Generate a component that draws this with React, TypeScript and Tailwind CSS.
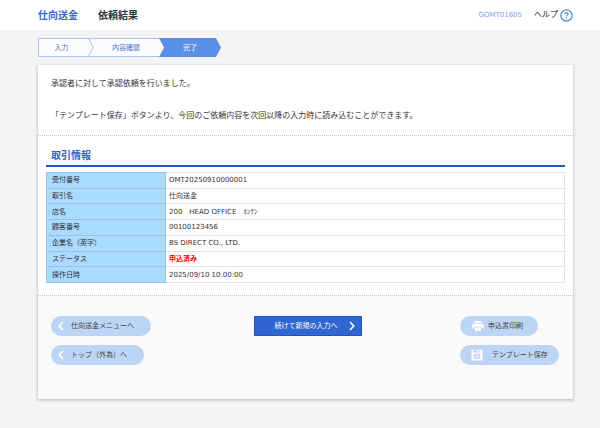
import React from 'react';

interface DetailRow {
  label: string;
  value: string;
  highlight?: boolean;
}

const rows: DetailRow[] = [
  { label: '受付番号', value: 'OMT20250910000001' },
  { label: '取引名', value: '仕向送金' },
  { label: '店名', value: '200　HEAD OFFICE　ﾎﾝﾃﾝ' },
  { label: '顧客番号', value: '00100123456' },
  { label: '企業名（英字）', value: 'BS DIRECT CO., LTD.' },
  { label: 'ステータス', value: '申込済み', highlight: true },
  { label: '操作日時', value: '2025/09/10 10:00:00' },
];

const ChevronLeft = () => (
  <svg width="6" height="10" viewBox="0 0 6 10" fill="none" stroke="#fff" strokeWidth="1.6" aria-hidden="true">
    <path d="M5 1 1.2 5 5 9" />
  </svg>
);

const ChevronRight = () => (
  <svg width="6" height="10" viewBox="0 0 6 10" fill="none" stroke="#fff" strokeWidth="1.6" aria-hidden="true">
    <path d="M1 1l3.8 4L1 9" />
  </svg>
);

const HelpIcon = () => (
  <svg width="13" height="13" viewBox="0 0 13 13" fill="none" stroke="#5585e2" aria-hidden="true">
    <circle cx="6.5" cy="6.5" r="5.6" strokeWidth="1.3" />
    <path d="M4.9 5.2c0-1 .7-1.6 1.6-1.6s1.6.6 1.6 1.4c0 1.1-1.6 1.2-1.6 2.5" strokeWidth="1.1" />
    <path d="M6.5 8.5v1.2" strokeWidth="1.2" />
  </svg>
);

const PrinterIcon = () => (
  <svg width="12" height="10" viewBox="0 0 12 10" aria-hidden="true">
    <path fill="#fff" d="M2.5 0h7v2h-7zM1.5 2.7h9A1.2 1.2 0 0 1 11.7 4v3.6H9.8V5.7H2.2v1.9H.3V4a1.2 1.2 0 0 1 1.2-1.3z" />
    <path fill="#fff" d="M3 6.4h6V10H3z" />
    <circle cx="9.9" cy="4.1" r=".5" fill="#bcd5f5" />
  </svg>
);

const SaveIcon = () => (
  <svg width="12" height="12" viewBox="0 0 12 12" aria-hidden="true">
    <path fill="#fff" d="M1 .5h1.5v3h6v-3H10l1.5 1.6V11a.6.6 0 0 1-.6.6H1.1a.6.6 0 0 1-.6-.6V1A.5.5 0 0 1 1 .5z" />
    <path fill="#fff" d="M5.6.5h1.5v2.2H5.6z" />
    <path fill="#bcd5f5" d="M2.7 5h6.6v5H2.7z" />
    <path stroke="#fff" strokeWidth=".5" d="M3.4 6.4h5.2M3.4 7.6h5.2M3.4 8.8h5.2" />
  </svg>
);

const Steps = () => (
  <ol className="flex h-[19px] text-[7px] leading-[18px] text-[#4672d0]">
    <li className="w-[50px] border-y border-l border-[#a9c3f3] bg-[#fcfcfc] pr-1 text-center">入力</li>
    <li className="flex w-[76px] border-y border-[#a9c3f3] bg-[#fcfcfc]">
      <svg className="-my-px shrink-0" width="6" height="19" viewBox="0 0 6 19" fill="none" stroke="#a9c3f3" aria-hidden="true">
        <path d="M.3.5 5.3 9.5.3 18.5" />
      </svg>
      <span className="flex-1 pr-1.5 text-center">内容確認</span>
    </li>
    <li
      aria-current="step"
      className="-ml-[5px] w-[62px] bg-[#5b8fe8] text-center leading-[20px] text-white [clip-path:polygon(0_0,57px_0,100%_50%,57px_100%,0_100%,5px_50%)]"
    >
      完了
    </li>
  </ol>
);

const pill = 'flex h-5 items-center rounded-full bg-[#bcd5f5] text-[7px] text-[#444]';

export default function App() {
  return (
    <div className="min-h-screen bg-[#f4f4f4] font-['DejaVu_Sans','Noto_Sans_CJK_JP',sans-serif] text-[#333]">
      <header className="flex h-[30px] items-center bg-white pr-[27px] pl-[38px]">
        <h1 className="flex gap-5 text-[10px] font-bold">
          <span className="text-[#3466cc]">仕向送金</span>
          <span>依頼結果</span>
        </h1>
        <span className="ml-auto text-[7px] text-[#7d9fea]">GOMT01605</span>
        <a href="#help" className="ml-3 flex items-center gap-0.5 text-[8px] text-[#222]">
          ヘルプ
          <HelpIcon />
        </a>
      </header>

      <div className="pt-2 pr-[27px] pb-7 pl-[38px]">
        <Steps />

        <main className="mt-2 bg-white shadow-[0_1px_2px_1px_rgba(0,0,0,0.16)]">
          <div className="h-[71px] border-b border-dotted border-[#c4c4c4] px-[13px] pt-[13px] text-[8px] leading-[12px]">
            <p>承認者に対して承認依頼を行いました。</p>
            <p className="mt-5">「テンプレート保存」ボタンより、今回のご依頼内容を次回以降の入力時に読み込むことができます。</p>
          </div>

          <section className="px-2 pt-3 pb-3">
            <h2 className="h-[19px] border-b-2 border-[#1f58cc] pl-[5px] text-[10px] leading-[16px] font-bold text-[#3062c8]">
              取引情報
            </h2>
            <table className="mt-[5px] h-[111px] w-full border-collapse text-left text-[7px] leading-[10px]">
              <tbody>
                {rows.map((row) => (
                  <tr key={row.label}>
                    <th scope="row" className="w-[119px] border border-[#9cc4de] bg-[#a9daff] p-0 pl-[5px] font-normal">
                      {row.label}
                    </th>
                    <td className={row.highlight ? 'border border-[#e4e4e4] p-0 pl-[3px] font-bold text-[#ff0000]' : 'border border-[#e4e4e4] p-0 pl-[3px]'}>
                      {row.value}
                    </td>
                  </tr>
                ))}
              </tbody>
            </table>
          </section>

          <footer className="flex items-start justify-between border-t border-dotted border-[#c4c4c4] bg-[#fafafa] pt-5 pr-[14px] pb-[34px] pl-[13px]">
            <div className="flex w-[104px] flex-col items-start gap-[9px]">
              <button type="button" className={`${pill} w-[100px] gap-[7px] pl-[7px]`}>
                <ChevronLeft />
                仕向送金メニューへ
              </button>
              <button type="button" className={`${pill} w-[93px] gap-[7px] pl-[7px]`}>
                <ChevronLeft />
                トップ（外為）へ
              </button>
            </div>
            <button
              type="button"
              className="flex h-5 w-[108px] items-center justify-end gap-[11px] border border-[#1f54c6] bg-[#3166d0] pr-1.5 text-[7px] text-white"
            >
              続けて新規の入力へ
              <ChevronRight />
            </button>
            <div className="flex flex-col items-start gap-[9px]">
              <button type="button" className={`${pill} w-[78px] gap-1 pl-3`}>
                <PrinterIcon />
                申込書印刷
              </button>
              <button type="button" className={`${pill} w-[99px] gap-[9px] pl-[11px]`}>
                <SaveIcon />
                テンプレート保存
              </button>
            </div>
          </footer>
        </main>
      </div>
    </div>
  );
}
